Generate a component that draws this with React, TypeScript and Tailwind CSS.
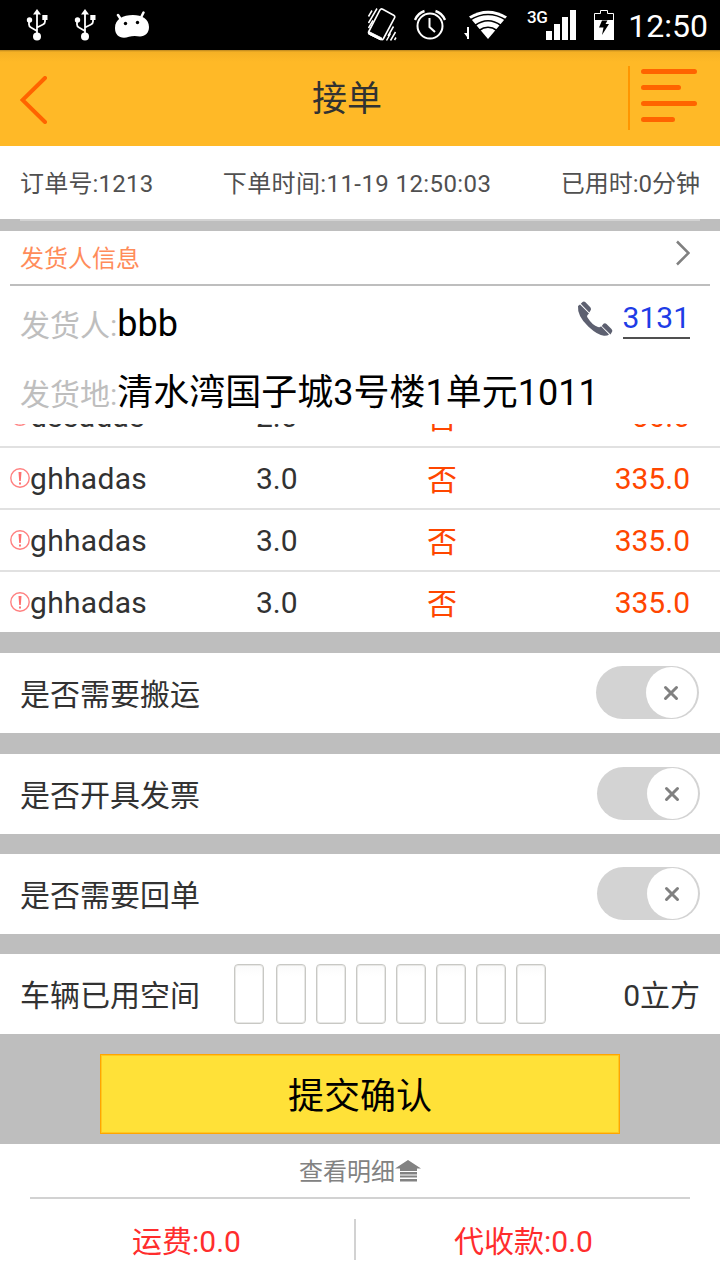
import React from 'react';

const goods = [
  { name: 'dssadas', amount: '2.0', fragile: '否', price: '56.0' },
  { name: 'ghhadas', amount: '3.0', fragile: '否', price: '335.0' },
  { name: 'ghhadas', amount: '3.0', fragile: '否', price: '335.0' },
  { name: 'ghhadas', amount: '3.0', fragile: '否', price: '335.0' },
];

const UsbIcon = () => (
  <svg width="22" height="32" viewBox="0 0 22 32" fill="none" stroke="white" strokeWidth="1.8">
    <path d="M11 27V4M11 22l-6-3.500q-2-1-2-3V11M11 18.500l6-3q2-1 2-3V9" />
    <path d="M11 0l4 5.500H7z" fill="white" stroke="none" />
    <circle cx="11" cy="27.500" r="4" fill="white" stroke="none" />
    <circle cx="3.500" cy="11" r="2.700" fill="white" stroke="none" />
    <path d="M16.300 6h5.200v5h-5.200z" fill="white" stroke="none" />
  </svg>
);

const AndroidIcon = () => (
  <svg width="36" height="28" viewBox="0 0 36 28">
    <path d="M4 4l4 6M29.500 1.500l-3 6" stroke="white" strokeWidth="2.500" strokeLinecap="round" />
    <path d="M1 17C1 8 9 4 19 4c9 0 16 4 16 12 0 6-4 9.500-9 9.500-4-.8-8-.7-11 .3C7 28.500 1 25 1 17z" fill="white" />
    <circle cx="11.500" cy="12.500" r="1.700" />
    <circle cx="23.500" cy="11.500" r="1.700" />
  </svg>
);

const VibrateIcon = () => (
  <svg width="30" height="36" viewBox="0 0 30 36" fill="none" stroke="white">
    <path d="M13 3q1-1.700 2.700-.8l11 6q1.700 1 .8 2.700L16.500 31.500q-1 1.700-2.700.8L2.500 27q-1.500-1-.7-2.500z" strokeWidth="1.600" />
    <path d="M1.800 24.500l13 6.500-1.300 2L1.500 27z" fill="white" strokeWidth="1" />
    <path d="M1.500 9.500L5 3.500M1.500 16L10 1.500M1.500 21L6 13.500M19.500 33.500l4-7M23.500 33.500l5-8.500M21 29l5.500-9.500M27.500 33l1.500-2.500" strokeWidth="1.500" />
  </svg>
);

const AlarmIcon = () => (
  <svg width="32" height="32" viewBox="0 0 32 32" fill="none" stroke="white" strokeWidth="2">
    <circle cx="16" cy="17" r="12.500" />
    <path d="M15.500 9v9l5.500 5" />
    <path d="M1 11Q4 4 10.500 2M31 11Q28 4 21.500 2" strokeWidth="2.400" />
  </svg>
);

const WifiIcon = () => (
  <svg width="44" height="30" viewBox="0 0 44 30">
    <path d="M3 17h2v12H3zM0 23h3v4z" fill="white" />
    <path d="M24 29L5 6.500Q24-5 43 6.500z" fill="white" />
    <path d="M6 10Q24-1 42 10M11 15.500Q24 6 37 15.500M15 20.500Q24 14 33 20.500" fill="none" stroke="black" strokeWidth="1.700" />
  </svg>
);

const SignalIcon = () => (
  <svg width="30" height="30" viewBox="0 0 30 30" fill="white">
    <path d="M0 21h6v9H0zM8 14h6v16H8zM16 7h6v23h-6zM24 0h6v30h-6z" />
  </svg>
);

const BatteryIcon = () => (
  <svg width="20" height="30" viewBox="0 0 20 30">
    <path d="M.5 10V3.500h6v-3h7v3h6V10" fill="none" stroke="white" />
    <path d="M0 10h20v20H0z" fill="white" />
    <path d="M8 10.500h5.500L11.500 14h3.500L8 25l1.500-7.500H5z" fill="black" />
  </svg>
);

const PhoneIcon = () => (
  <svg width="36" height="36" viewBox="0 0 36 36" fill="#5d6070">
    <path d="M1 5L3 3.500l9 9-1.500 1.500q-1 1 0 2.500 5 8 10.500 9.500 2 .5 3-.7l8 8.200q-1.500 1.500-5 1.300-6-.3-15.500-9Q0 15 1 5z" />
    <path d="M3.800 2.800L5.500 1q1.500-1 3 .3l5 5.200q1 1.500.3 2.500l-1.500 2.500zM24.800 25l1.700-2.200q1.500-1 3 .2l5 5q1.300 1.500.7 2.500l-1.700 3z" />
  </svg>
);

const WarnIcon = () => (
  <svg className="shrink-0" width="20" height="20" viewBox="0 0 20 20" fill="none" stroke="#ff8080">
    <circle cx="10" cy="10" r="9.200" strokeWidth="1.400" />
    <path d="M8.500 4h3l-.7 9H9.200zM9 14.500h2v2H9z" fill="#ff7070" stroke="none" />
  </svg>
);

const Toggle = () => (
  <div className="mb-px flex h-[53px] w-[103px] items-center justify-end rounded-full bg-[#d3d3d3] pr-[2px]">
    <div className="flex size-[51px] items-center justify-center rounded-full bg-white pr-0.5">
      <svg width="16" height="16" viewBox="0 0 16 16" stroke="#808080" strokeWidth="3" strokeLinecap="round">
        <path d="M2.500 2.500l11 11M13.500 2.500l-11 11" />
      </svg>
    </div>
  </div>
);

const OptionRow = ({ label, shift = false }: { label: string; shift?: boolean }) => (
  <div className={`flex h-20 items-center justify-between bg-white pl-5 text-3xl ${shift ? 'pr-[21px]' : 'pr-5'}`}>
    <span className="pt-[3px]">{label}</span>
    <Toggle />
  </div>
);

const App = () => {
  return (
    <div className="flex h-[1280px] w-[720px] flex-col overflow-hidden bg-[#bebebe] font-[Roboto,'Noto_Sans_CJK_SC',sans-serif] text-[#323232]">
      {/* Status bar */}
      <div className="flex h-[50px] shrink-0 items-center bg-black pr-3 pl-[26px] text-white">
        <UsbIcon />
        <div className="ml-[26px]"><UsbIcon /></div>
        <div className="ml-[18px]"><AndroidIcon /></div>
        <div className="ml-[217px]"><VibrateIcon /></div>
        <div className="ml-[17px]"><AlarmIcon /></div>
        <div className="ml-[18px]"><WifiIcon /></div>
        <span className="mb-4 ml-[19px] w-[19px] text-[17px] leading-none font-medium tracking-tight">3G</span>
        <SignalIcon />
        <div className="ml-[18px]"><BatteryIcon /></div>
        <span className="ml-auto pt-0.5 text-[32px] leading-none">12:50</span>
      </div>

      {/* Title bar */}
      <div className="flex h-24 shrink-0 items-center bg-[linear-gradient(#b9851f_0,#f5b125_2px,#ffb927_12px)] pr-[23px] pl-5">
        <svg className="mt-1" width="28" height="48" viewBox="0 0 28 48" fill="none" stroke="#ff6400" strokeWidth="4" strokeLinecap="round">
          <path d="M25 2L2.500 24 25 46" />
        </svg>
        <h1 className="ml-[264px] pt-[5px] text-[35px]">接单</h1>
        <div className="ml-auto flex items-center">
          <div className="mr-[11px] h-16 w-0.5 bg-[#ff9600]" />
          <svg className="mb-1" width="56" height="54" viewBox="0 0 56 54" stroke="#ff6400" strokeWidth="5" strokeLinecap="round">
            <path d="M2.500 2.500h51M2.500 18.500h35M2.500 34.500h51M2.500 50.500h29" />
          </svg>
        </div>
      </div>

      {/* Order summary */}
      <div className="flex h-[73px] shrink-0 items-center justify-between bg-white px-5 pt-[3px] text-2xl text-[#505050]">
        <span className="tracking-[0.2px]">订单号:1213</span>
        <span className="tracking-[0.4px]">下单时间:11-19 12:50:03</span>
        <span>已用时:0分钟</span>
      </div>
      <div className="h-3 shrink-0 px-5">
        <div className="h-0.5 bg-[#d3d3d3]" />
      </div>

      {/* Sender */}
      <div className="h-[193px] shrink-0 bg-white">
        <div className="mx-[10px] flex h-[55px] items-center justify-between border-b-2 border-[#bebebe] pr-5 pl-[10px] text-2xl text-[#ff8c5a]">
          <span className="pt-[3px]">发货人信息</span>
          <svg className="mb-2.5" width="14" height="26" viewBox="0 0 14 26" fill="none" stroke="#808080" strokeWidth="2.500">
            <path d="M1 1.500L12.500 13 1 24.500" />
          </svg>
        </div>
        <div className="flex h-[70px] items-center pr-[30px] pl-5">
          <span className="pt-[9px] text-3xl text-[#bebebe]">发货人:</span>
          <span className="pt-[5px] text-4xl text-black">bbb</span>
          <div className="mb-1 ml-auto flex items-center">
            <PhoneIcon />
            <span className="ml-[10px] border-b-2 border-[#505050] pt-px pb-px text-3xl text-[#1e3ce6]">3131</span>
          </div>
        </div>
        <div className="flex h-[68px] items-center pl-5">
          <span className="pt-[9px] text-3xl text-[#bebebe]">发货地:</span>
          <span className="pt-[5px] text-4xl text-black">清水湾国子城3号楼1单元1011</span>
        </div>
      </div>

      {/* Goods list, scrolled to its end */}
      <div className="flex h-[208px] shrink-0 flex-col justify-end overflow-hidden bg-white text-3xl">
        {goods.map((item, i) => (
          <div key={i} className="flex h-[62px] shrink-0 items-center border-b-2 border-[#e1e1e1] pr-[30px] pl-[10px] last:h-[60px] last:border-b-0">
            <div className="flex w-[246px] items-center">
              <WarnIcon />
              <span className="pt-0.5 tracking-[0.3px]">{item.name}</span>
            </div>
            <span className="w-[171px] pt-px">{item.amount}</span>
            <span className="pt-[3px] text-[#ff4600]">{item.fragile}</span>
            <span className="ml-auto pt-px text-[#ff4600]">{item.price}</span>
          </div>
        ))}
      </div>

      {/* Options */}
      <div className="mt-[21px] flex shrink-0 flex-col gap-5">
        <div className="mb-px"><OptionRow label="是否需要搬运" shift /></div>
        <OptionRow label="是否开具发票" />
        <OptionRow label="是否需要回单" />
        <div className="flex h-20 items-center bg-white px-5 text-3xl">
          <span className="pt-[3px]">车辆已用空间</span>
          <div className="ml-[34px] flex gap-[10px]">
            {[...Array(8)].map((_, i) => (
              <div key={i} className="h-[60px] w-[30px] rounded border border-[#c8c8c4] bg-linear-to-b from-[#fafafa] to-white to-20% shadow-[inset_0_0_0_1px_#e8e8e6] first:mr-0.5" />
            ))}
          </div>
          <span className="ml-auto pt-[3px]">0立方</span>
        </div>
      </div>

      <button className="mx-[100px] mt-5 mb-[10px] h-20 shrink-0 border border-[#ffa500] bg-[#ffe138] pt-1.5 text-4xl text-black shadow-[inset_0_0_0_1px_#ffc820]">
        提交确认
      </button>

      {/* Totals */}
      <div className="flex-1 bg-white">
        <div className="mx-[30px] flex h-[55px] items-center justify-center border-b-2 border-[#d2d2d2] text-2xl text-[#828282]">
          <span className="pt-[3px]">查看明细</span>
          <svg width="26" height="22" viewBox="0 0 26 22" fill="#828282">
            <path d="M13 0l13 8.500H0zM5 8h17v3H5zM5 12h17v2.500H5zM5 15.500h17v2H5zM5 19h17v2.500H5z" />
          </svg>
        </div>
        <div className="flex h-[81px] items-center text-3xl text-[#ff2d2d]">
          <span className="flex-1 pt-1 pl-[19px] text-center">运费:0.0</span>
          <div className="h-[41px] w-0.5 bg-[#d2d2d2]" />
          <span className="flex-1 pt-1 pr-[29px] text-center">代收款:0.0</span>
        </div>
      </div>
    </div>
  );
};

export default App;
